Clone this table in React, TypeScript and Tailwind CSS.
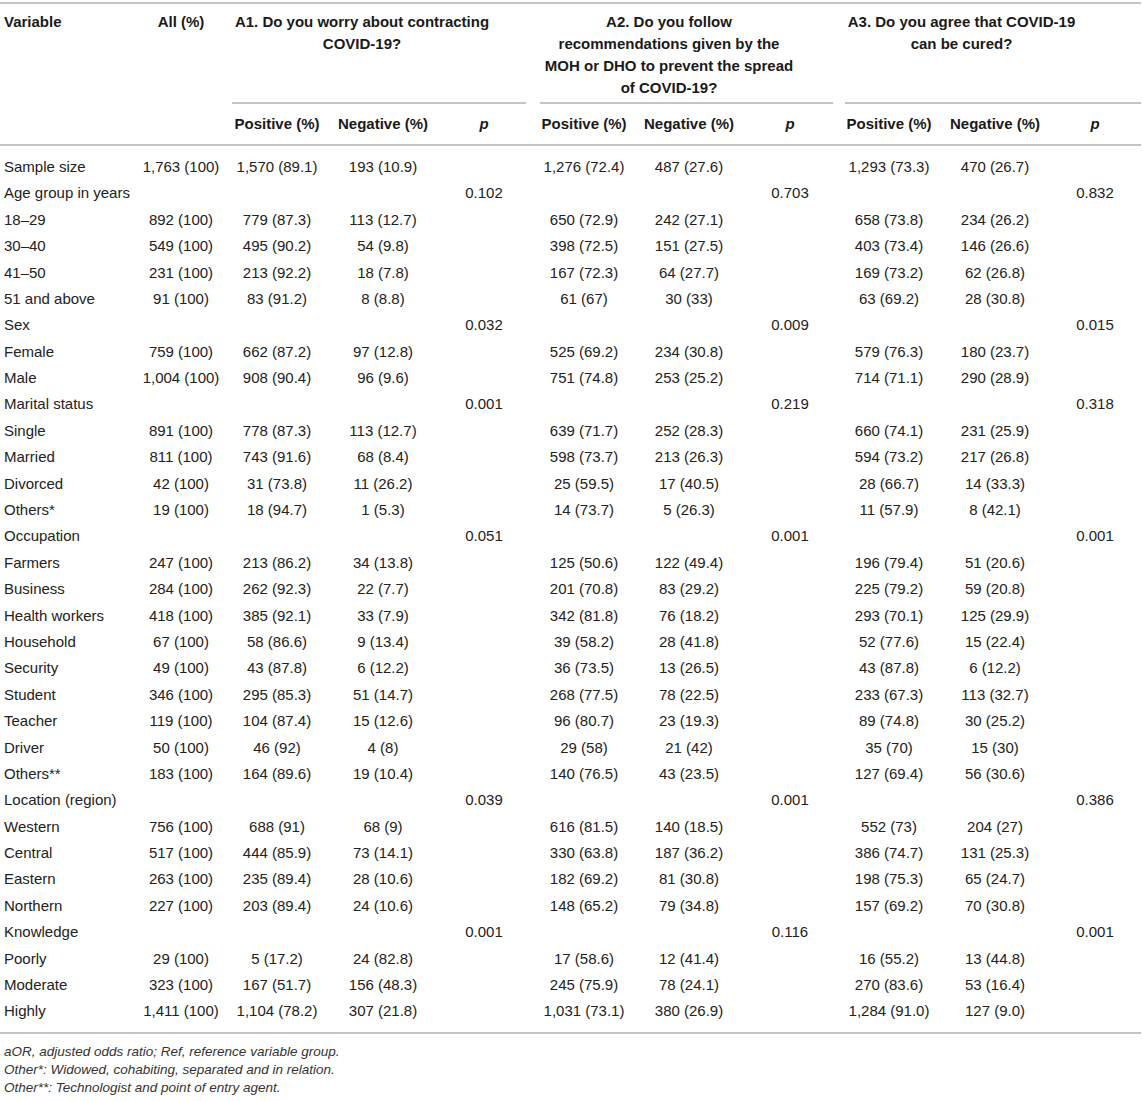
const rows: [string, ...string[]][] = [
  ["Sample size", "1,763 (100)", "1,570 (89.1)", "193 (10.9)", "", "1,276 (72.4)", "487 (27.6)", "", "1,293 (73.3)", "470 (26.7)", ""],
  ["Age group in years", "", "", "", "0.102", "", "", "0.703", "", "", "0.832"],
  ["18–29", "892 (100)", "779 (87.3)", "113 (12.7)", "", "650 (72.9)", "242 (27.1)", "", "658 (73.8)", "234 (26.2)", ""],
  ["30–40", "549 (100)", "495 (90.2)", "54 (9.8)", "", "398 (72.5)", "151 (27.5)", "", "403 (73.4)", "146 (26.6)", ""],
  ["41–50", "231 (100)", "213 (92.2)", "18 (7.8)", "", "167 (72.3)", "64 (27.7)", "", "169 (73.2)", "62 (26.8)", ""],
  ["51 and above", "91 (100)", "83 (91.2)", "8 (8.8)", "", "61 (67)", "30 (33)", "", "63 (69.2)", "28 (30.8)", ""],
  ["Sex", "", "", "", "0.032", "", "", "0.009", "", "", "0.015"],
  ["Female", "759 (100)", "662 (87.2)", "97 (12.8)", "", "525 (69.2)", "234 (30.8)", "", "579 (76.3)", "180 (23.7)", ""],
  ["Male", "1,004 (100)", "908 (90.4)", "96 (9.6)", "", "751 (74.8)", "253 (25.2)", "", "714 (71.1)", "290 (28.9)", ""],
  ["Marital status", "", "", "", "0.001", "", "", "0.219", "", "", "0.318"],
  ["Single", "891 (100)", "778 (87.3)", "113 (12.7)", "", "639 (71.7)", "252 (28.3)", "", "660 (74.1)", "231 (25.9)", ""],
  ["Married", "811 (100)", "743 (91.6)", "68 (8.4)", "", "598 (73.7)", "213 (26.3)", "", "594 (73.2)", "217 (26.8)", ""],
  ["Divorced", "42 (100)", "31 (73.8)", "11 (26.2)", "", "25 (59.5)", "17 (40.5)", "", "28 (66.7)", "14 (33.3)", ""],
  ["Others*", "19 (100)", "18 (94.7)", "1 (5.3)", "", "14 (73.7)", "5 (26.3)", "", "11 (57.9)", "8 (42.1)", ""],
  ["Occupation", "", "", "", "0.051", "", "", "0.001", "", "", "0.001"],
  ["Farmers", "247 (100)", "213 (86.2)", "34 (13.8)", "", "125 (50.6)", "122 (49.4)", "", "196 (79.4)", "51 (20.6)", ""],
  ["Business", "284 (100)", "262 (92.3)", "22 (7.7)", "", "201 (70.8)", "83 (29.2)", "", "225 (79.2)", "59 (20.8)", ""],
  ["Health workers", "418 (100)", "385 (92.1)", "33 (7.9)", "", "342 (81.8)", "76 (18.2)", "", "293 (70.1)", "125 (29.9)", ""],
  ["Household", "67 (100)", "58 (86.6)", "9 (13.4)", "", "39 (58.2)", "28 (41.8)", "", "52 (77.6)", "15 (22.4)", ""],
  ["Security", "49 (100)", "43 (87.8)", "6 (12.2)", "", "36 (73.5)", "13 (26.5)", "", "43 (87.8)", "6 (12.2)", ""],
  ["Student", "346 (100)", "295 (85.3)", "51 (14.7)", "", "268 (77.5)", "78 (22.5)", "", "233 (67.3)", "113 (32.7)", ""],
  ["Teacher", "119 (100)", "104 (87.4)", "15 (12.6)", "", "96 (80.7)", "23 (19.3)", "", "89 (74.8)", "30 (25.2)", ""],
  ["Driver", "50 (100)", "46 (92)", "4 (8)", "", "29 (58)", "21 (42)", "", "35 (70)", "15 (30)", ""],
  ["Others**", "183 (100)", "164 (89.6)", "19 (10.4)", "", "140 (76.5)", "43 (23.5)", "", "127 (69.4)", "56 (30.6)", ""],
  ["Location (region)", "", "", "", "0.039", "", "", "0.001", "", "", "0.386"],
  ["Western", "756 (100)", "688 (91)", "68 (9)", "", "616 (81.5)", "140 (18.5)", "", "552 (73)", "204 (27)", ""],
  ["Central", "517 (100)", "444 (85.9)", "73 (14.1)", "", "330 (63.8)", "187 (36.2)", "", "386 (74.7)", "131 (25.3)", ""],
  ["Eastern", "263 (100)", "235 (89.4)", "28 (10.6)", "", "182 (69.2)", "81 (30.8)", "", "198 (75.3)", "65 (24.7)", ""],
  ["Northern", "227 (100)", "203 (89.4)", "24 (10.6)", "", "148 (65.2)", "79 (34.8)", "", "157 (69.2)", "70 (30.8)", ""],
  ["Knowledge", "", "", "", "0.001", "", "", "0.116", "", "", "0.001"],
  ["Poorly", "29 (100)", "5 (17.2)", "24 (82.8)", "", "17 (58.6)", "12 (41.4)", "", "16 (55.2)", "13 (44.8)", ""],
  ["Moderate", "323 (100)", "167 (51.7)", "156 (48.3)", "", "245 (75.9)", "78 (24.1)", "", "270 (83.6)", "53 (16.4)", ""],
  ["Highly", "1,411 (100)", "1,104 (78.2)", "307 (21.8)", "", "1,031 (73.1)", "380 (26.9)", "", "1,284 (91.0)", "127 (9.0)", ""],
];

const cols =
  "grid grid-cols-[132px_98px_94px_118px_84px_116px_94px_108px_90px_122px_85px]";

function Rule() {
  return <div className="h-[2px] w-full bg-[#c4c4c4]" />;
}

function SubHead() {
  return (
    <>
      <div className="text-center">Positive (%)</div>
      <div className="text-center">Negative (%)</div>
      <div className="text-center italic">p</div>
    </>
  );
}

export default function App() {
  return (
    <div className="w-[1141px] bg-white pt-[2px] text-[15px] text-[#222] font-['Liberation_Sans',Arial,sans-serif]">
      <Rule />

      {/* header */}
      <div className={`${cols} pt-[7px] font-bold leading-[22px] text-[#1a1a1a]`}>
        <div className="pl-[4px]">Variable</div>
        <div className="text-center">All (%)</div>
        <div className="col-span-3 flex flex-col">
          <div className="pr-[32px] text-center">
            A1. Do you worry about contracting
            <br />
            COVID-19?
          </div>
          <div className="mt-auto ml-[2px] h-[2px] bg-[#c4c4c4]" />
        </div>
        <div className="col-span-3 flex flex-col">
          <div className="pr-[32px] text-center">
            A2. Do you follow
            <br />
            recommendations given by the
            <br />
            MOH or DHO to prevent the spread
            <br />
            of COVID-19?
          </div>
          <div className="mt-[3px] ml-[14px] mr-[11px] h-[2px] bg-[#c4c4c4]" />
        </div>
        <div className="col-span-3 flex flex-col">
          <div className="pr-[62px] text-center">
            A3. Do you agree that COVID-19
            <br />
            can be cured?
          </div>
          <div className="mt-auto ml-[1px] h-[2px] bg-[#c4c4c4]" />
        </div>
      </div>

      <div className={`${cols} h-[40px] items-center font-bold text-[#1a1a1a]`}>
        <div />
        <div />
        <SubHead />
        <SubHead />
        <div className="col-span-3 grid grid-cols-[90px_122px_85px]">
          <div className="text-center">Positive (%)</div>
          <div className="text-center">Negative (%)</div>
          <div className="pr-[7px] text-center italic">p</div>
        </div>
      </div>

      <Rule />

      {/* body */}
      <div className="pt-[8px] pb-[7px]">
        {rows.map((r) => (
          <div key={r[0]} className={`${cols} h-[26.4px] items-center`}>
            <div className="pl-[4px] whitespace-nowrap">{r[0]}</div>
            {r.slice(1).map((v, i) => (
              <div
                key={i}
                className={`text-center whitespace-nowrap ${i === 9 ? "pr-[7px]" : ""}`}
              >
                {v}
              </div>
            ))}
          </div>
        ))}
      </div>

      <Rule />

      <div className="mt-[9px] pl-[4px] text-[13.5px] italic leading-[18px] text-[#333]">
        <p>aOR, adjusted odds ratio; Ref, reference variable group.</p>
        <p>Other*: Widowed, cohabiting, separated and in relation.</p>
        <p>Other**: Technologist and point of entry agent.</p>
      </div>
    </div>
  );
}
